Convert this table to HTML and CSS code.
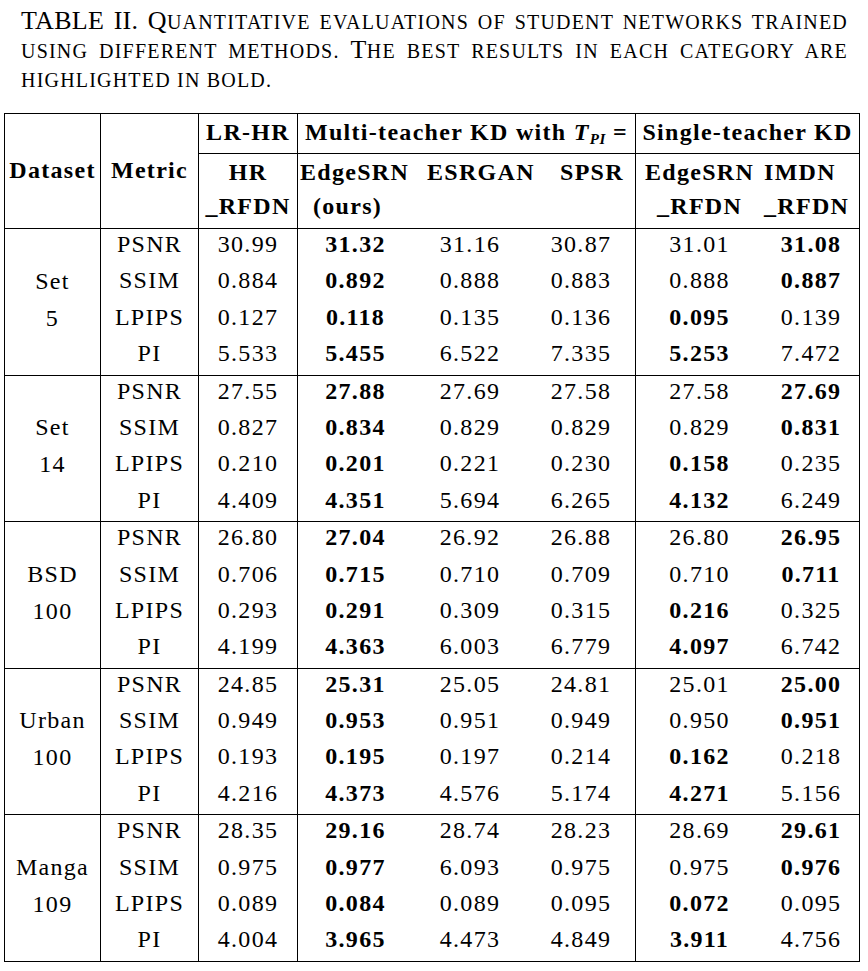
FILE: index.html
```html
<!DOCTYPE html>
<html lang="en">
<head>
<meta charset="utf-8">
<title>Table II</title>
<link rel="stylesheet" href="styles.css">
</head>
<body>
<div class="caption">
  <div class="cap-line">TABLE II. Q<span class="sc">UANTITATIVE EVALUATIONS OF STUDENT NETWORKS TRAINED</span></div>
  <div class="cap-line"><span class="sc">USING DIFFERENT METHODS. </span>T<span class="sc">HE BEST RESULTS IN EACH CATEGORY ARE</span></div>
  <div class="cap-line last"><span class="sc">HIGHLIGHTED IN BOLD.</span></div>
</div>
<table class="results">
  <colgroup>
    <col class="c-ds"><col class="c-m"><col class="c-lr"><col class="c-e1"><col class="c-es"><col class="c-sp"><col class="c-e2"><col class="c-im">
  </colgroup>
  <thead>
    <tr class="h1">
      <th rowspan="2">Dataset</th>
      <th rowspan="2" class="v">Metric</th>
      <th class="v">LR-HR</th>
      <th colspan="3" class="v">Multi-teacher KD with <i>T</i><sub class="sub">PI</sub> =</th>
      <th colspan="2" class="v">Single-teacher KD</th>
    </tr>
    <tr class="h2">
      <th class="v">HR<br>_RFDN</th>
      <th class="v h-edge">EdgeSRN<span class="ours">(ours)</span></th>
      <th class="h-esr">ESRGAN</th>
      <th class="h-spsr">SPSR</th>
      <th class="v">EdgeSRN<br>_RFDN</th>
      <th class="h-imdn">IMDN<br>_RFDN</th>
    </tr>
  </thead>
  <tbody>
    <tr><td rowspan="4" class="ds">Set<br>5</td><td>PSNR</td><td>30.99</td><td class="best">31.32</td><td>31.16</td><td>30.87</td><td>31.01</td><td class="best">31.08</td></tr>
    <tr><td>SSIM</td><td>0.884</td><td class="best">0.892</td><td>0.888</td><td>0.883</td><td>0.888</td><td class="best">0.887</td></tr>
    <tr><td>LPIPS</td><td>0.127</td><td class="best">0.118</td><td>0.135</td><td>0.136</td><td class="best">0.095</td><td>0.139</td></tr>
    <tr><td>PI</td><td>5.533</td><td class="best">5.455</td><td>6.522</td><td>7.335</td><td class="best">5.253</td><td>7.472</td></tr>
  </tbody>
  <tbody>
    <tr><td rowspan="4" class="ds">Set<br>14</td><td>PSNR</td><td>27.55</td><td class="best">27.88</td><td>27.69</td><td>27.58</td><td>27.58</td><td class="best">27.69</td></tr>
    <tr><td>SSIM</td><td>0.827</td><td class="best">0.834</td><td>0.829</td><td>0.829</td><td>0.829</td><td class="best">0.831</td></tr>
    <tr><td>LPIPS</td><td>0.210</td><td class="best">0.201</td><td>0.221</td><td>0.230</td><td class="best">0.158</td><td>0.235</td></tr>
    <tr><td>PI</td><td>4.409</td><td class="best">4.351</td><td>5.694</td><td>6.265</td><td class="best">4.132</td><td>6.249</td></tr>
  </tbody>
  <tbody>
    <tr><td rowspan="4" class="ds">BSD<br>100</td><td>PSNR</td><td>26.80</td><td class="best">27.04</td><td>26.92</td><td>26.88</td><td>26.80</td><td class="best">26.95</td></tr>
    <tr><td>SSIM</td><td>0.706</td><td class="best">0.715</td><td>0.710</td><td>0.709</td><td>0.710</td><td class="best">0.711</td></tr>
    <tr><td>LPIPS</td><td>0.293</td><td class="best">0.291</td><td>0.309</td><td>0.315</td><td class="best">0.216</td><td>0.325</td></tr>
    <tr><td>PI</td><td>4.199</td><td class="best">4.363</td><td>6.003</td><td>6.779</td><td class="best">4.097</td><td>6.742</td></tr>
  </tbody>
  <tbody>
    <tr><td rowspan="4" class="ds">Urban<br>100</td><td>PSNR</td><td>24.85</td><td class="best">25.31</td><td>25.05</td><td>24.81</td><td>25.01</td><td class="best">25.00</td></tr>
    <tr><td>SSIM</td><td>0.949</td><td class="best">0.953</td><td>0.951</td><td>0.949</td><td>0.950</td><td class="best">0.951</td></tr>
    <tr><td>LPIPS</td><td>0.193</td><td class="best">0.195</td><td>0.197</td><td>0.214</td><td class="best">0.162</td><td>0.218</td></tr>
    <tr><td>PI</td><td>4.216</td><td class="best">4.373</td><td>4.576</td><td>5.174</td><td class="best">4.271</td><td>5.156</td></tr>
  </tbody>
  <tbody>
    <tr><td rowspan="4" class="ds">Manga<br>109</td><td>PSNR</td><td>28.35</td><td class="best">29.16</td><td>28.74</td><td>28.23</td><td>28.69</td><td class="best">29.61</td></tr>
    <tr><td>SSIM</td><td>0.975</td><td class="best">0.977</td><td>6.093</td><td>0.975</td><td>0.975</td><td class="best">0.976</td></tr>
    <tr><td>LPIPS</td><td>0.089</td><td class="best">0.084</td><td>0.089</td><td>0.095</td><td class="best">0.072</td><td>0.095</td></tr>
    <tr><td>PI</td><td>4.004</td><td class="best">3.965</td><td>4.473</td><td>4.849</td><td class="best">3.911</td><td>4.756</td></tr>
  </tbody>
</table>
</body>
</html>
```
FILE: styles.css
```css
html, body {
  margin: 0;
  padding: 0;
  background: #ffffff;
  color: #000000;
  font-family: "Liberation Serif", "Times New Roman", serif;
}

.caption {
  width: 827px;
  margin: 0 0 0 21px;
  padding-top: 6px;
  font-size: 26px;
  line-height: 29px;
  letter-spacing: 0.3px;
}

.cap-line {
  text-align: justify;
  text-align-last: justify;
}

.cap-line.last {
  text-align-last: left;
}

.sc {
  font-size: 20px;
  line-height: 1;
  letter-spacing: 1.2px;
}

.results {
  margin: 20px 0 0 4px;
  width: 856px;
  table-layout: fixed;
  border-collapse: separate;
  border-spacing: 0;
  border: 1px solid #000;
  font-size: 24px;
  letter-spacing: 1.3px;
}

.c-ds { width: 95px; }
.c-m  { width: 98px; }
.c-lr { width: 99px; }
.c-e1 { width: 116px; }
.c-es { width: 114px; }
.c-sp { width: 108px; }
.c-e2 { width: 128px; }
.c-im { width: 96px; }

.results th,
.results td {
  padding: 0;
  text-align: center;
  white-space: nowrap;
  vertical-align: middle;
  font-weight: normal;
}

.results th {
  font-weight: bold;
}

.results th.v {
  border-left: 1px solid #000;
}

.h1 th {
  line-height: 36px;
  padding-bottom: 3px;
}

.h2 th {
  border-top: 1px solid #000;
  line-height: 34px;
  padding: 1px 0 5px;
  vertical-align: top;
}

.results .h-edge {
  text-align: left;
  padding-left: 2px;
}

.ours {
  display: block;
  padding-left: 13px;
}

.results .h-esr {
  text-align: left;
  padding-left: 14px;
}

.results .h-spsr {
  text-align: left;
  padding-left: 33px;
}

.results .h-imdn {
  text-align: left;
  padding-left: 1px;
}

.sub {
  font-size: 15px;
  font-style: italic;
  vertical-align: -4px;
  line-height: 0;
  letter-spacing: 0.5px;
}

.results td {
  line-height: 31px;
  padding-bottom: 5.4px;
}

.results td.ds {
  line-height: 37px;
  padding-bottom: 4px;
}

.results td.best {
  font-weight: bold;
}

.results tbody tr:first-child td {
  border-top: 1px solid #000;
}

.results tbody td:nth-last-child(7),
.results tbody td:nth-last-child(6),
.results tbody td:nth-last-child(5),
.results tbody td:nth-last-child(2) {
  border-left: 1px solid #000;
}
```
